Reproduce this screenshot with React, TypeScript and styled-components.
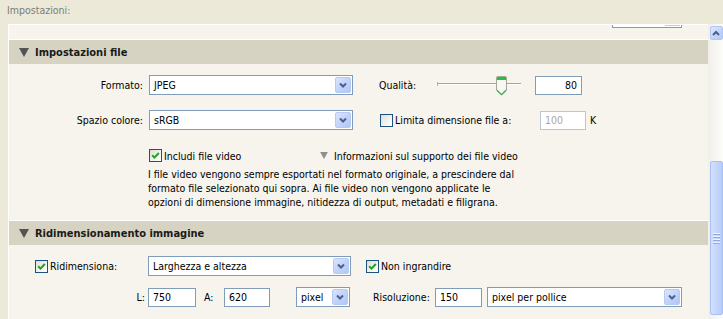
import React from 'react';
import styled, { createGlobalStyle } from 'styled-components';

const GlobalStyle = createGlobalStyle`
  html, body {
    margin: 0;
    padding: 0;
  }
  body {
    background: #ece9d8;
    font-family: 'DejaVu Sans Condensed', 'Liberation Sans', Arial, sans-serif;
    font-size: 10.5px;
    color: #000;
    overflow: hidden;
  }
`;

const TopLabel = styled.div`
  height: 24px;
  box-sizing: border-box;
  padding: 4px 0 0 7px;
  color: #7c7c7c;
  line-height: 13px;
`;

const Frame = styled.div`
  display: flex;
  margin-left: 8px;
  height: 295px;
`;

const Panel = styled.div`
  flex: 1;
  background: #f6f4ed;
  border-top: 1px solid #ffffff;
  border-left: 1px solid #ffffff;
  overflow: hidden;
`;

const TopStrip = styled.div`
  height: 14px;
  padding-left: 603px;
`;

const CutSelect = styled.div`
  width: 70px;
  height: 3px;
  box-sizing: border-box;
  border: 1px solid #7f9db9;
  border-top: none;
  display: flex;
  justify-content: flex-end;
  background: #fff;
`;

const CutButton = styled.div`
  width: 15px;
  height: 1px;
  margin-right: 1px;
  background: #b7c9f4;
`;

const Header = styled.div`
  height: 24px;
  border-top: 1px solid #ffffff;
  background: #d6d3c3;
  display: flex;
  align-items: center;
  gap: 6px;
  padding-left: 10px;
  font-size: 11px;
  font-weight: bold;
  color: #1a1a1a;
`;

const SectionBody = styled.div<{ $bottom: number }>`
  display: flex;
  flex-direction: column;
  padding-bottom: ${p => p.$bottom}px;
`;

const Row = styled.div<{ $top: number; $left?: number; $height?: number }>`
  display: flex;
  align-items: center;
  margin-top: ${p => p.$top}px;
  padding-left: ${p => p.$left ?? 0}px;
  height: ${p => p.$height ?? 20}px;
`;

const Label = styled.div<{ $width: number; $right?: boolean; $gap?: number; $pad?: number }>`
  width: ${p => p.$width}px;
  flex-shrink: 0;
  box-sizing: border-box;
  text-align: ${p => (p.$right ? 'right' : 'left')};
  padding-right: ${p => p.$gap ?? 0}px;
  padding-left: ${p => p.$pad ?? 0}px;
  white-space: nowrap;
`;

const Spacer = styled.div<{ $width: number }>`
  width: ${p => p.$width}px;
  flex-shrink: 0;
`;

const SelectBox = styled.div<{ $width: number }>`
  width: ${p => p.$width}px;
  height: 20px;
  flex-shrink: 0;
  box-sizing: border-box;
  border: 1px solid #7f9db9;
  background: #ffffff;
  display: flex;
  align-items: center;
  padding: 0 1px 0 4px;
`;

const SelectText = styled.span`
  flex: 1;
  white-space: nowrap;
`;

const DropButton = styled.div`
  width: 16px;
  height: 16px;
  box-sizing: border-box;
  border: 1px solid #b9caf2;
  border-radius: 2px;
  background: linear-gradient(135deg, #dbe5fd 0%, #c2d3fb 50%, #b2c7f7 100%);
  display: flex;
  align-items: center;
  justify-content: center;
`;

const TextBox = styled.div<{ $width: number; $alignRight?: boolean; $disabled?: boolean }>`
  width: ${p => p.$width}px;
  height: 19px;
  flex-shrink: 0;
  box-sizing: border-box;
  border: 1px solid ${p => (p.$disabled ? '#b8c6d8' : '#7f9db9')};
  background: #ffffff;
  color: ${p => (p.$disabled ? '#aca899' : '#000')};
  display: flex;
  align-items: center;
  justify-content: ${p => (p.$alignRight ? 'flex-end' : 'flex-start')};
  padding: 0 4px;
`;

const CheckLabel = styled.div<{ $width: number }>`
  width: ${p => p.$width}px;
  flex-shrink: 0;
  display: flex;
  align-items: center;
  gap: 2px;
  white-space: nowrap;
`;

const Box = styled.div`
  width: 13px;
  height: 13px;
  box-sizing: border-box;
  border: 1px solid #1c5180;
  background: linear-gradient(135deg, #dcdcd7 0%, #f4f4f1 60%, #ffffff 100%);
  display: flex;
  align-items: center;
  justify-content: center;
`;

const InfoLink = styled.div`
  display: flex;
  align-items: center;
  gap: 6px;
  white-space: nowrap;
`;

const Note = styled.p`
  margin: 5px 0 0 139px;
  line-height: 14px;
  white-space: nowrap;
`;

const Unit = styled.span`
  margin-left: 4px;
`;

const Scrollbar = styled.div`
  width: 15px;
  display: flex;
  flex-direction: column;
  align-items: center;
  padding-left: 1px;
  box-sizing: border-box;
  background: linear-gradient(to right, #f1efe8, #fdfdfa);
`;

const ScrollButton = styled.div`
  width: 13px;
  height: 14px;
  margin-top: 2px;
  box-sizing: border-box;
  border: 1px solid #b2c6f5;
  border-radius: 2px;
  background: linear-gradient(135deg, #dfe8fe 0%, #c4d4fb 55%, #b3c8f7 100%);
  display: flex;
  align-items: center;
  justify-content: center;
`;

const ScrollThumb = styled.div`
  width: 13px;
  height: 154px;
  margin-top: 121px;
  box-sizing: border-box;
  border: 1px solid #a9bff3;
  border-radius: 2px;
  background: linear-gradient(to right, #d3e0fd, #c3d4fb 60%, #b8cbf8);
  display: flex;
  flex-direction: column;
  align-items: center;
  justify-content: center;
  gap: 1px;
`;

const Grip = styled.div`
  width: 7px;
  height: 1px;
  background: #eef3fe;
  border-bottom: 1px solid #8faae6;
`;

const Chevron = ({ up }: { up?: boolean }) => (
  <svg width="8" height="6" viewBox="0 0 8 6">
    <path
      d={up ? 'M1 5 L4 2 L7 5' : 'M1 1.5 L4 4.5 L7 1.5'}
      fill="none"
      stroke="#4d6185"
      strokeWidth="2"
    />
  </svg>
);

const Select = ({ width, value }: { width: number; value: string }) => (
  <SelectBox $width={width}>
    <SelectText>{value}</SelectText>
    <DropButton>
      <Chevron />
    </DropButton>
  </SelectBox>
);

const Check = ({ checked }: { checked?: boolean }) => (
  <Box>
    {checked && (
      <svg width="9" height="9" viewBox="0 0 9 9">
        <path d="M1.2 4.3 L3.5 6.6 L7.8 2" fill="none" stroke="#21a121" strokeWidth="2" />
      </svg>
    )}
  </Box>
);

const Triangle = ({ size, color }: { size: number; color: string }) => (
  <svg width={size} height={size - 1} viewBox="0 0 10 9">
    <polygon points="0,0 10,0 5,9" fill={color} />
  </svg>
);

const QualitySlider = () => (
  <svg width="85" height="21" viewBox="0 0 85 21">
    <rect x="0" y="8" width="84" height="1" fill="#a8a699" />
    <rect x="0" y="9" width="84" height="1" fill="#ffffff" />
    <rect x="0" y="7" width="1" height="4" fill="#b5b3a6" />
    <path
      d="M59.5 2.5 Q59.5 1.5 60.5 1.5 L68.5 1.5 Q69.5 1.5 69.5 2.5 L69.5 15 L64.5 20 L59.5 15 Z"
      fill="#f7f7f4"
      stroke="#a6a596"
    />
    <rect x="60" y="2" width="9" height="3" fill="#21c33c" />
    <path d="M60 15.2 L64.5 19.6 L69 15.2" fill="none" stroke="#36b24c" strokeWidth="1.2" />
  </svg>
);

const App = () => {
  return (
    <>
      <GlobalStyle />
      <TopLabel>Impostazioni:</TopLabel>
      <Frame>
        <Panel>
          <TopStrip>
            <CutSelect>
              <CutButton />
            </CutSelect>
          </TopStrip>

          <Header>
            <Triangle size={10} color="#545454" />
            Impostazioni file
          </Header>
          <SectionBody $bottom={11}>
            <Row $top={11}>
              <Label $width={140} $right $gap={6}>Formato:</Label>
              <Select width={204} value="JPEG" />
              <Spacer $width={26} />
              <Label $width={58}>Qualità:</Label>
              <QualitySlider />
              <Spacer $width={13} />
              <TextBox $width={47} $alignRight>80</TextBox>
            </Row>
            <Row $top={15}>
              <Label $width={140} $right $gap={6}>Spazio colore:</Label>
              <Select width={204} value="sRGB" />
              <Spacer $width={27} />
              <CheckLabel $width={160}>
                <Check />
                Limita dimensione file a:
              </CheckLabel>
              <TextBox $width={46} $disabled>100</TextBox>
              <Unit>K</Unit>
            </Row>
            <Row $top={19} $left={140} $height={13}>
              <CheckLabel $width={171}>
                <Check checked />
                Includi file video
              </CheckLabel>
              <InfoLink>
                <Triangle size={8} color="#8f8f8f" />
                Informazioni sul supporto dei file video
              </InfoLink>
            </Row>
            <Note>
              I file video vengono sempre esportati nel formato originale, a prescindere dal
              <br />
              formato file selezionato qui sopra. Ai file video non vengono applicate le
              <br />
              opzioni di dimensione immagine, nitidezza di output, metadati e filigrana.
            </Note>
          </SectionBody>

          <Header>
            <Triangle size={10} color="#545454" />
            Ridimensionamento immagine
          </Header>
          <SectionBody $bottom={0}>
            <Row $top={11} $left={26}>
              <CheckLabel $width={113}>
                <Check checked />
                Ridimensiona:
              </CheckLabel>
              <Select width={203} value="Larghezza e altezza" />
              <Spacer $width={15} />
              <CheckLabel $width={120}>
                <Check checked />
                Non ingrandire
              </CheckLabel>
            </Row>
            <Row $top={11}>
              <Label $width={139} $right $gap={3}>L:</Label>
              <TextBox $width={48}>750</TextBox>
              <Label $width={28} $pad={8}>A:</Label>
              <TextBox $width={46}>620</TextBox>
              <Spacer $width={26} />
              <Select width={54} value="pixel" />
              <Spacer $width={23} />
              <Label $width={62}>Risoluzione:</Label>
              <TextBox $width={47}>150</TextBox>
              <Spacer $width={5} />
              <Select width={195} value="pixel per pollice" />
            </Row>
          </SectionBody>
        </Panel>
        <Scrollbar>
          <ScrollButton>
            <Chevron up />
          </ScrollButton>
          <ScrollThumb>
            <Grip />
            <Grip />
            <Grip />
            <Grip />
          </ScrollThumb>
        </Scrollbar>
      </Frame>
    </>
  );
};

export default App;
